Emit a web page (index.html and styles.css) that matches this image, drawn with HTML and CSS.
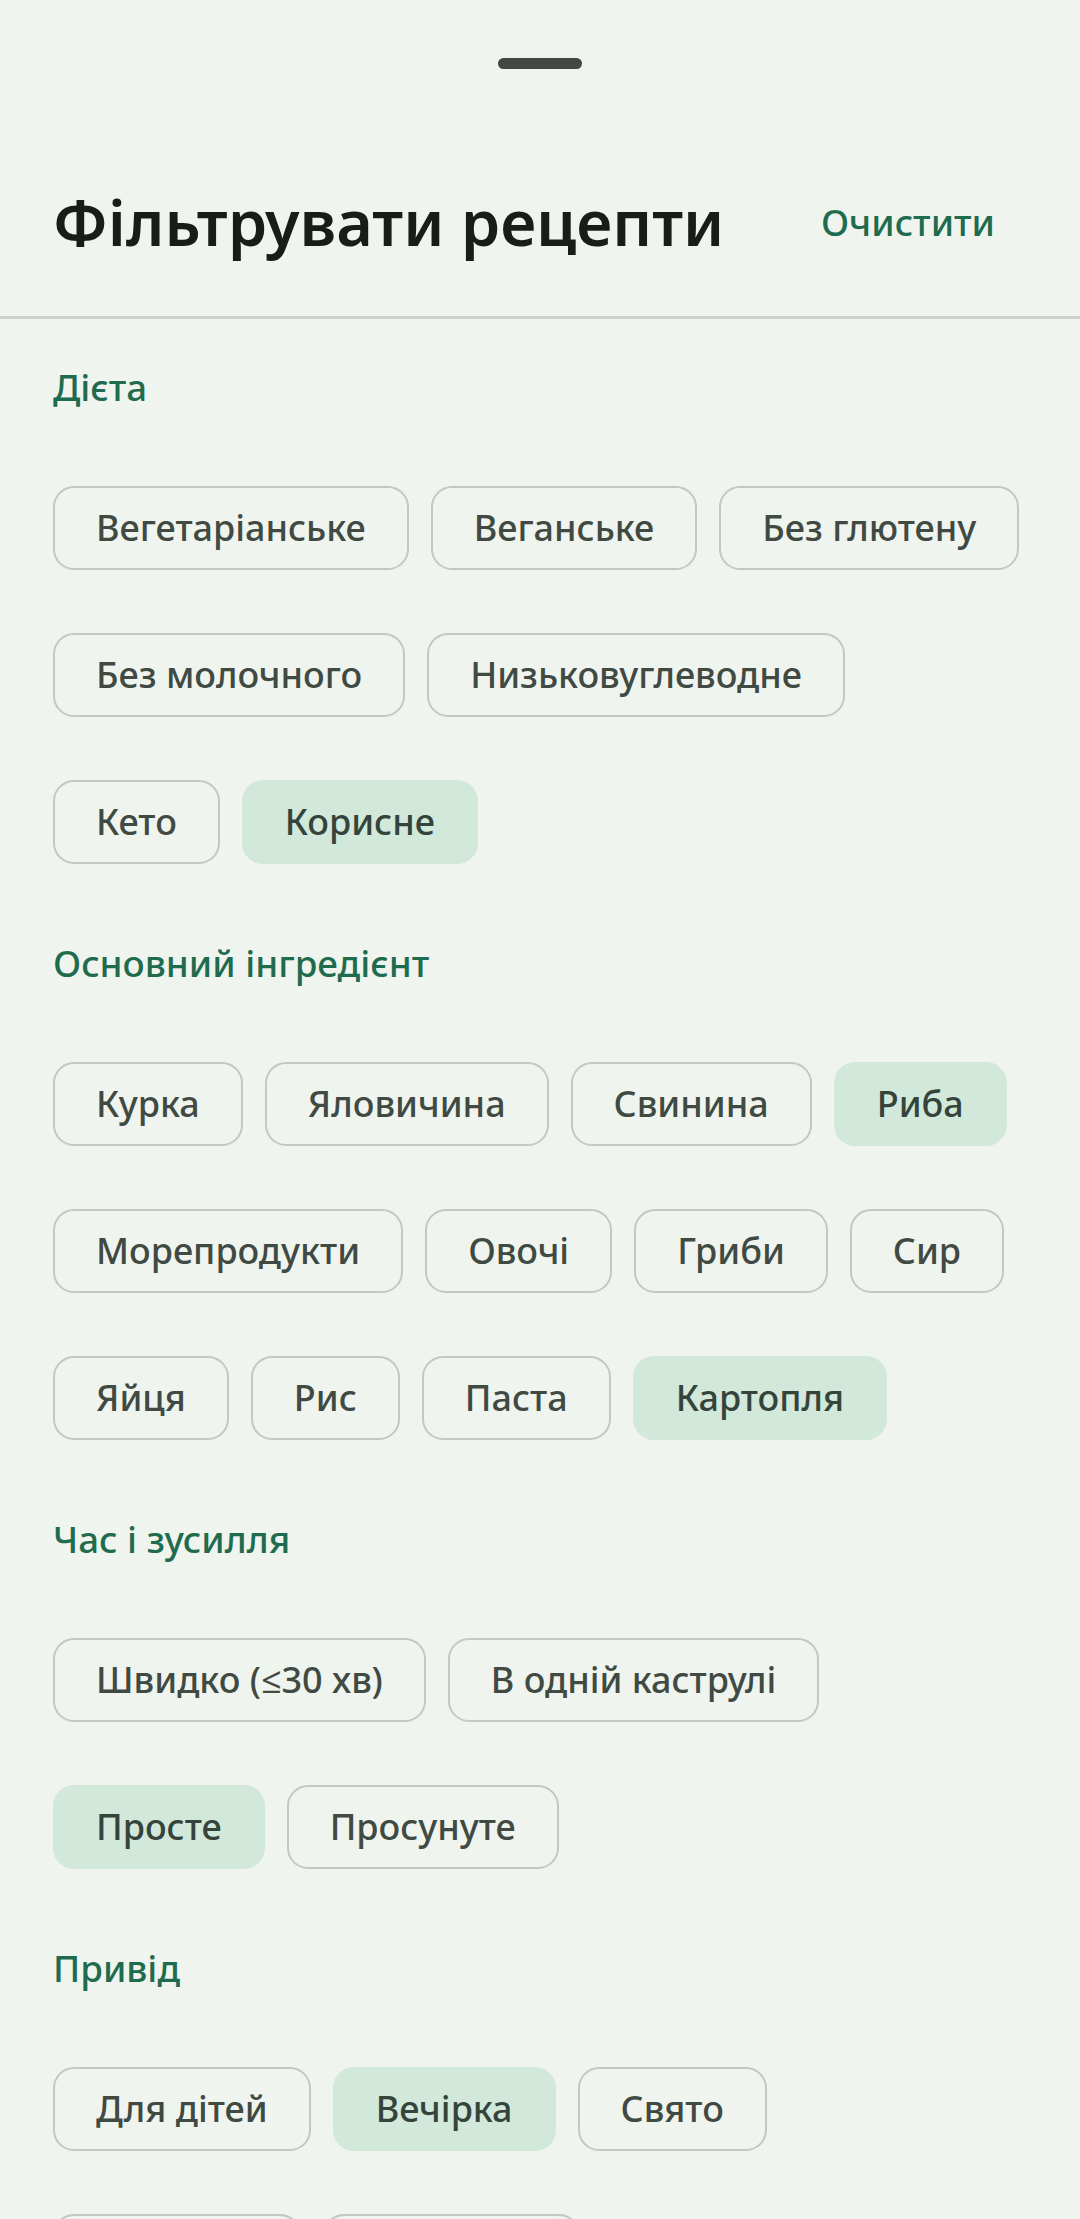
FILE: index.html
```html
<!DOCTYPE html>
<html lang="uk">
<head>
  <meta charset="UTF-8" />
  <title>Фільтрувати рецепти</title>
  <link rel="stylesheet" href="styles.css">
</head>
<body>
  <div class="sheet">
    <div class="handle"></div>

    <header class="sheet-header">
      <h1>Фільтрувати рецепти</h1>
      <button class="clear-btn">Очистити</button>
    </header>

    <div class="filters">
      <!-- Diet -->
      <section class="group">
        <h2>Дієта</h2>
        <div class="chips">
          <span class="chip">Вегетаріанське</span>
          <span class="chip">Веганське</span>
          <span class="chip">Без глютену</span>
          <span class="chip">Без молочного</span>
          <span class="chip">Низьковуглеводне</span>
          <span class="chip">Кето</span>
          <span class="chip selected">Корисне</span>
        </div>
      </section>

      <!-- Main ingredient -->
      <section class="group">
        <h2>Основний інгредієнт</h2>
        <div class="chips">
          <span class="chip">Курка</span>
          <span class="chip">Яловичина</span>
          <span class="chip">Свинина</span>
          <span class="chip selected">Риба</span>
          <span class="chip">Морепродукти</span>
          <span class="chip">Овочі</span>
          <span class="chip">Гриби</span>
          <span class="chip">Сир</span>
          <span class="chip">Яйця</span>
          <span class="chip">Рис</span>
          <span class="chip">Паста</span>
          <span class="chip selected">Картопля</span>
        </div>
      </section>

      <!-- Time and effort -->
      <section class="group">
        <h2>Час і зусилля</h2>
        <div class="chips">
          <span class="chip">Швидко (≤30 хв)</span>
          <span class="chip">В одній каструлі</span>
          <span class="chip selected">Просте</span>
          <span class="chip">Просунуте</span>
        </div>
      </section>

      <!-- Occasion -->
      <section class="group">
        <h2>Привід</h2>
        <div class="chips">
          <span class="chip">Для дітей</span>
          <span class="chip selected">Вечірка</span>
          <span class="chip">Свято</span>
          <span class="chip">Сніданок</span>
          <span class="chip">Ланчбокс</span>
        </div>
      </section>
    </div>
  </div>
</body>
</html>
```

FILE: styles.css
```css
body {
  margin: 0;
  font-family: "Noto Sans", "Open Sans", sans-serif;
  background-color: #eff4ee;
  height: 100vh;
  overflow: hidden;
}

.sheet {
  display: flex;
  flex-direction: column;
}

.handle {
  width: 84px;
  height: 11px;
  margin: 58px auto 0;
  border-radius: 6px;
  background-color: #414942;
}

.sheet-header {
  display: flex;
  align-items: center;
  justify-content: space-between;
  padding: 108px 53px 49px;
  border-bottom: 3px solid #cdd1cb;
}

.sheet-header h1 {
  margin: 0;
  font-size: 63px;
  line-height: 84px;
  font-weight: 600;
  color: #181d19;
}

.clear-btn {
  border: none;
  background: none;
  padding: 20px 32px 20px 30px;
  font-family: inherit;
  font-size: 36.75px;
  font-weight: 500;
  color: #1f6b4e;
  cursor: pointer;
}

.filters {
  padding: 44px 53px 0;
}

.group h2 {
  margin: 0 0 54px;
  font-size: 36.75px;
  line-height: 48px;
  font-weight: 500;
  color: #1f6b4e;
}

.chips {
  display: flex;
  flex-wrap: wrap;
  column-gap: 22px;
  row-gap: 21px;
  margin-bottom: 54px;
}

.chip {
  margin: 21px 0;
  padding: 0 41px;
  height: 84px;
  box-sizing: border-box;
  line-height: 80px;
  border: 2px solid #c3c8c1;
  border-radius: 21px;
  font-size: 36px;
  font-weight: 500;
  color: #404a43;
  white-space: nowrap;
}

.chip.selected {
  border-color: transparent;
  background-color: #d1e8db;
  color: #34443a;
}
```
